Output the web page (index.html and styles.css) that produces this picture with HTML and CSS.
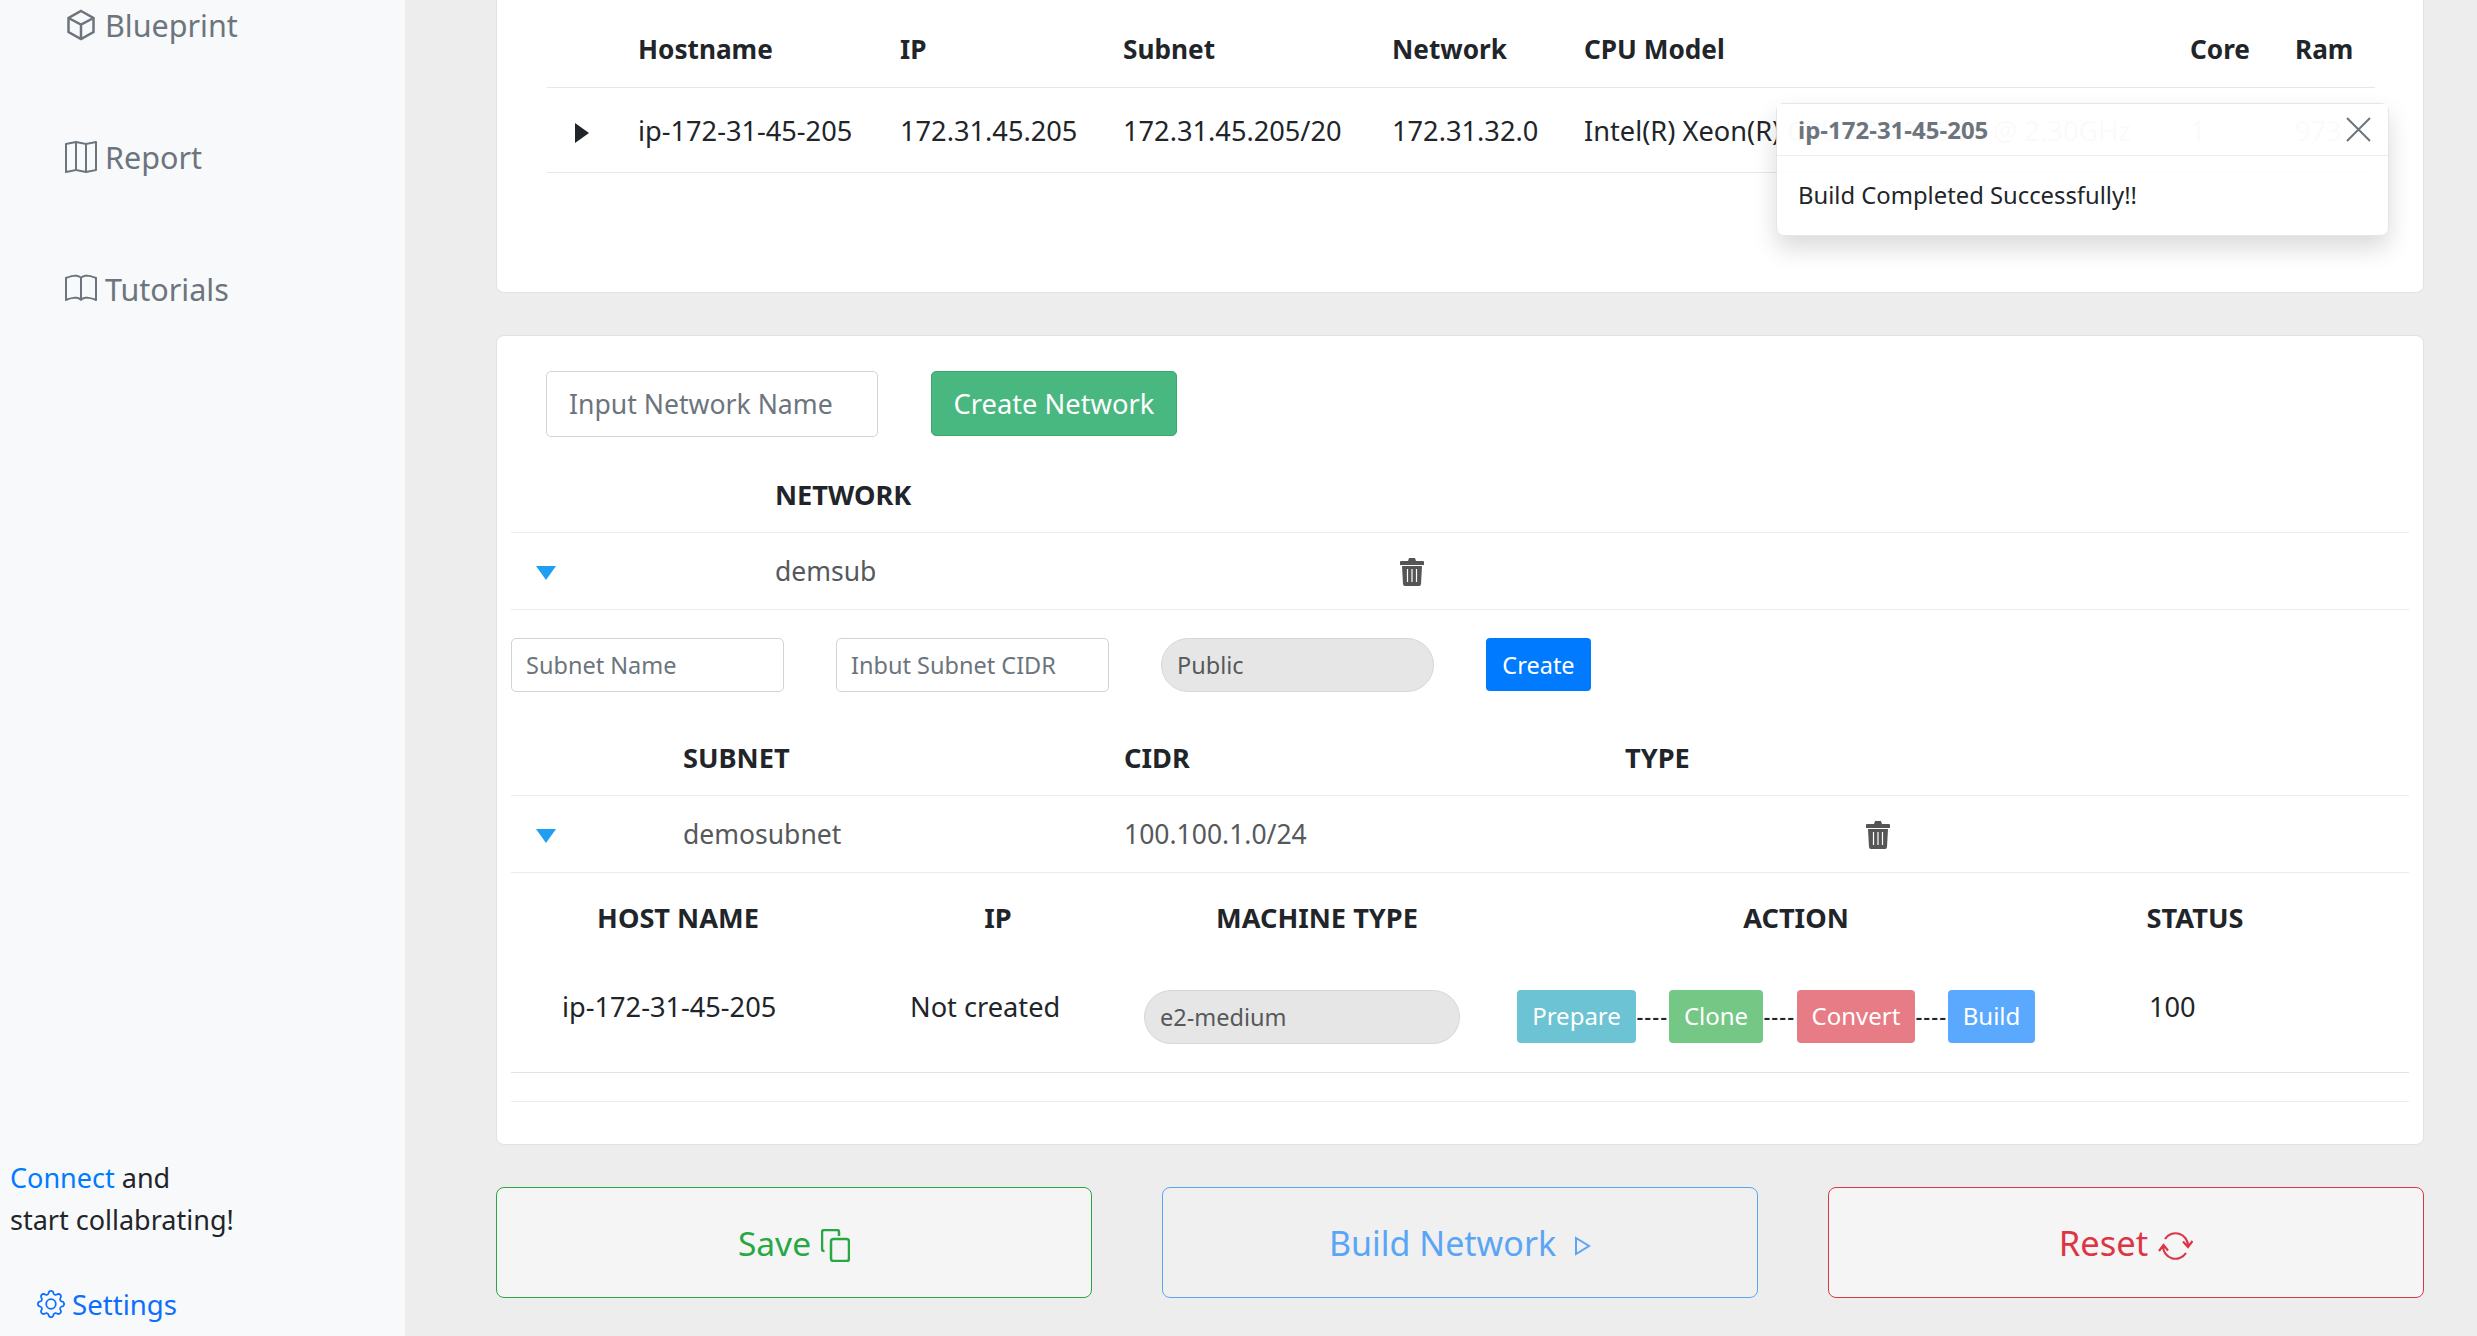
FILE: index.html
```html
<!DOCTYPE html>
<html lang="en">
<head>
  <meta charset="UTF-8" />
  <title>Network Builder</title>
  <link rel="stylesheet" href="styles.css">
</head>
<body>
  <div class="app">
    <aside class="sidebar">
      <nav class="side-nav">
        <a href="#blueprint">
          <svg class="nav-icon box-icon" viewBox="0 0 28 31"><path d="M14 1.500l12.500 7v14L14 29.500l-12.500-7v-14zM1.500 8.500L14 15l12.500-6.500M14 15v14.500"/></svg>
          Blueprint
        </a>
        <a href="#report">
          <svg class="nav-icon" viewBox="0 0 16 16"><path d="M15.817.113A.5.5 0 0 1 16 .5v14a.5.5 0 0 1-.402.49l-5 1a.502.502 0 0 1-.196 0L5.5 15.01l-4.902.98A.5.5 0 0 1 0 15.5v-14a.5.5 0 0 1 .402-.49l5-1a.5.5 0 0 1 .196 0L10.5.99l4.902-.98a.5.5 0 0 1 .415.103zM10 1.910l-4-.8v12.980l4 .8V1.910zm1 12.980 4-.8V1.110l-4 .8v12.980zm-6-.8V1.110l-4 .8v12.980l4-.8z"/></svg>
          Report
        </a>
        <a href="#tutorials">
          <svg class="nav-icon" viewBox="0 0 16 16"><path d="M1 2.828c.885-.37 2.154-.769 3.388-.893 1.33-.134 2.458.063 3.112.752v9.746c-.935-.53-2.12-.603-3.213-.493-1.18.12-2.37.461-3.287.811V2.828zm7.5-.141c.654-.689 1.782-.886 3.112-.752 1.234.124 2.503.523 3.388.893v9.923c-.918-.35-2.107-.692-3.287-.81-1.094-.111-2.278-.039-3.213.492V2.687zM8 1.783C7.015.936 5.587.81 4.287.94c-1.514.153-3.042.672-3.994 1.105A.5.5 0 0 0 0 2.5v11a.5.5 0 0 0 .707.455c.882-.4 2.303-.881 3.68-1.02 1.409-.142 2.59.087 3.223.877a.5.5 0 0 0 .78 0c.633-.79 1.814-1.019 3.222-.877 1.378.139 2.8.62 3.681 1.02A.5.5 0 0 0 16 13.5v-11a.5.5 0 0 0-.293-.455c-.952-.433-2.48-.952-3.994-1.105C10.413.809 8.985.936 8 1.783z"/></svg>
          Tutorials
        </a>
      </nav>
      <div class="side-foot">
        <p class="collab"><a href="#connect">Connect</a> and<br>start collabrating!</p>
        <a class="settings" href="#settings">
          <svg class="gear-icon" viewBox="0 0 16 16"><path d="M8 4.754a3.246 3.246 0 1 0 0 6.492 3.246 3.246 0 0 0 0-6.492zM5.754 8a2.246 2.246 0 1 1 4.492 0 2.246 2.246 0 0 1-4.492 0z"/><path d="M9.796 1.343c-.527-1.79-3.065-1.79-3.592 0l-.094.319a.873.873 0 0 1-1.255.52l-.292-.16c-1.64-.892-3.433.902-2.54 2.541l.159.292a.873.873 0 0 1-.52 1.255l-.319.094c-1.79.527-1.79 3.065 0 3.592l.319.094a.873.873 0 0 1 .52 1.255l-.16.292c-.892 1.64.901 3.434 2.541 2.54l.292-.159a.873.873 0 0 1 1.255.52l.094.319c.527 1.79 3.065 1.79 3.592 0l.094-.319a.873.873 0 0 1 1.255-.52l.292.16c1.64.893 3.434-.902 2.54-2.541l-.159-.292a.873.873 0 0 1 .52-1.255l.319-.094c1.79-.527 1.79-3.065 0-3.592l-.319-.094a.873.873 0 0 1-.52-1.255l.16-.292c.893-1.64-.902-3.433-2.541-2.54l-.292.159a.873.873 0 0 1-1.255-.52l-.094-.319zm-2.633.283c.246-.835 1.428-.835 1.674 0l.094.319a1.873 1.873 0 0 0 2.693 1.115l.291-.16c.764-.415 1.6.42 1.184 1.185l-.159.292a1.873 1.873 0 0 0 1.116 2.692l.318.094c.835.246.835 1.428 0 1.674l-.319.094a1.873 1.873 0 0 0-1.115 2.693l.16.291c.415.764-.42 1.6-1.185 1.184l-.291-.159a1.873 1.873 0 0 0-2.693 1.116l-.094.318c-.246.835-1.428.835-1.674 0l-.094-.319a1.873 1.873 0 0 0-2.692-1.115l-.292.16c-.764.415-1.6-.42-1.184-1.185l.159-.291A1.873 1.873 0 0 0 1.945 8.930l-.319-.094c-.835-.246-.835-1.428 0-1.674l.319-.094A1.873 1.873 0 0 0 3.060 4.377l-.16-.292c-.415-.764.42-1.6 1.185-1.184l.292.159a1.873 1.873 0 0 0 2.692-1.115l.094-.319z"/></svg>
          Settings
        </a>
      </div>
    </aside>

    <main class="content">
      <section class="card card-hosts">
        <div class="host-row host-head">
          <span></span><span>Hostname</span><span>IP</span><span>Subnet</span><span>Network</span><span>CPU Model</span><span>Core</span><span>Ram</span>
        </div>
        <div class="host-row">
          <svg class="caret-right" viewBox="0 0 14 20"><path d="M0 0l14 10L0 20z"/></svg>
          <span>ip-172-31-45-205</span><span>172.31.45.205</span><span>172.31.45.205/20</span><span>172.31.32.0</span>
          <span class="cpu">Intel(R) Xeon(R) CPU E5-2686 v4 @ 2.30GHz</span><span>1</span><span>973</span>
        </div>

        <div class="toast">
          <div class="toast-head">
            <strong>ip-172-31-45-205</strong>
            <svg class="toast-close" viewBox="0 0 25 25"><path d="M1 1l23 23M24 1L1 24"/></svg>
          </div>
          <div class="toast-body">Build Completed Successfully!!</div>
        </div>
      </section>

      <section class="card card-network">
        <div class="net-form">
          <input class="input input-lg" placeholder="Input Network Name">
          <button class="btn-create-net">Create Network</button>
        </div>

        <div class="net-row net-head"><span></span><span>NETWORK</span></div>
        <div class="net-row">
          <svg class="caret-down" viewBox="0 0 20 14"><path d="M0 0h20L10 14z"/></svg>
          <span>demsub</span>
          <svg class="trash" viewBox="0 0 24 28"><path d="M9 0h6l1 3h7a1 1 0 0 1 1 1v3H0V4a1 1 0 0 1 1-1h7zM2 8h20l-1 18a2 2 0 0 1-2 2H5a2 2 0 0 1-2-2z"/><path class="trash-bars" d="M7.5 11v13M12 11v13M16.500 11v13"/></svg>
        </div>

        <div class="subnet-form">
          <input class="input" placeholder="Subnet Name">
          <input class="input" placeholder="Inbut Subnet CIDR">
          <div class="select">Public</div>
          <button class="btn-create">Create</button>
        </div>

        <div class="subnet-row subnet-head"><span></span><span>SUBNET</span><span>CIDR</span><span>TYPE</span></div>
        <div class="subnet-row">
          <svg class="caret-down" viewBox="0 0 20 14"><path d="M0 0h20L10 14z"/></svg>
          <span>demosubnet</span>
          <span>100.100.1.0/24</span>
          <span></span>
          <svg class="trash" viewBox="0 0 24 28"><path d="M9 0h6l1 3h7a1 1 0 0 1 1 1v3H0V4a1 1 0 0 1 1-1h7zM2 8h20l-1 18a2 2 0 0 1-2 2H5a2 2 0 0 1-2-2z"/><path class="trash-bars" d="M7.5 11v13M12 11v13M16.500 11v13"/></svg>
        </div>

        <div class="machine-head">
          <span>HOST NAME</span><span>IP</span><span>MACHINE TYPE</span><span>ACTION</span><span>STATUS</span>
        </div>
        <div class="machine-row">
          <span>ip-172-31-45-205</span>
          <span>Not created</span>
          <div class="select select-machine">e2-medium</div>
          <div class="actions">
            <button class="step step-prepare">Prepare</button><span class="dash">----</span>
            <button class="step step-clone">Clone</button><span class="dash">----</span>
            <button class="step step-convert">Convert</button><span class="dash">----</span>
            <button class="step step-build">Build</button>
          </div>
          <span>100</span>
        </div>
        <div class="empty-row"></div>
      </section>

      <div class="bottom-btns">
        <button class="big-btn big-save">Save
          <svg class="save-icon" viewBox="0 0 29 33"><rect x="10" y="10" width="18" height="22" rx="2.500"/><path d="M3.500 22H3a2 2 0 0 1-2-2V3a2 2 0 0 1 2-2h13a2 2 0 0 1 2 2v4"/></svg>
        </button>
        <button class="big-btn big-build">Build Network
          <svg class="play-icon" viewBox="0 0 17 20"><path d="M2 2l13 8-13 8z"/></svg>
        </button>
        <button class="big-btn big-reset">Reset
          <svg class="reset-icon" viewBox="0 0 35 28"><path d="M7 7A12.500 12.500 0 0 1 30 14M28 21A12.500 12.500 0 0 1 5 14M25 9.500l5 5.500 4.500-6M1 19l4.500-6 4.500 5.500"/></svg>
        </button>
      </div>
    </main>
  </div>
</body>
</html>
```

FILE: styles.css
```css
* {
  box-sizing: border-box;
}
html, body {
  margin: 0;
  height: 1336px;
  overflow: hidden;
}
body {
  font-family: "Noto Sans", "Open Sans", sans-serif;
  font-size: 26.500px;
  color: #212529;
  background: #eeedee;
}
a {
  text-decoration: none;
}
button, input {
  font-family: inherit;
}
.app {
  display: flex;
  height: 1336px;
}

/* sidebar */
.sidebar {
  width: 405px;
  flex: none;
  background: #f8f9fa;
  display: flex;
  flex-direction: column;
  justify-content: space-between;
}
.side-nav {
  display: flex;
  flex-direction: column;
  gap: 90px;
  padding: 4px 0 0 65px;
}
.side-nav a {
  display: flex;
  align-items: center;
  gap: 8px;
  height: 42px;
  font-size: 30.500px;
  color: #6c757d;
}
.nav-icon {
  width: 32px;
  height: 32px;
  fill: #6c757d;
}
.box-icon {
  padding: 0 2px;
  fill: none;
  stroke: #6c757d;
  stroke-width: 2.500;
}
.side-foot {
  padding: 0 0 13px 10px;
}
.collab {
  margin: 0 0 44px;
  line-height: 42px;
  font-size: 27px;
}
.collab a {
  color: #007bff;
}
.settings {
  display: flex;
  align-items: center;
  gap: 7px;
  padding-left: 27px;
  font-size: 27.600px;
  color: #0d6efd;
}
.gear-icon {
  width: 28px;
  height: 28px;
  fill: #0d6efd;
}

/* main column */
.content {
  flex: 1;
  padding: 0 53px 0 91px;
  display: flex;
  flex-direction: column;
}
.card {
  background: #fff;
  border: 1px solid #e2e2e4;
  border-top-width: 0;
  border-radius: 0 0 8px 8px;
}
.card-hosts {
  position: relative;
  height: 293px;
  padding: 0 48px 0 50px;
  margin-bottom: 42px;
}
.card-network {
  height: 810px;
  padding: 35px 14px 0;
  border-top-width: 1px;
  border-radius: 8px;
  margin-bottom: 42px;
}

/* host table */
.host-row {
  display: grid;
  grid-template-columns: 91px 262px 223px 269px 192px 606px 105px 1fr;
  align-items: center;
  height: 85px;
  border-bottom: 1px solid #e5e7ea;
  white-space: nowrap;
  font-size: 27.200px;
}
.host-head {
  height: 88px;
  font-weight: 700;
  padding-top: 10px;
  font-size: 26.200px;
}
.caret-right {
  width: 14px;
  height: 20px;
  margin: 6px 0 0 28px;
  fill: #212529;
}

/* toast */
.toast {
  position: absolute;
  top: 103px;
  right: 34px;
  width: 613px;
  height: 133px;
  background: rgba(255, 255, 255, 0.85);
  border: 1px solid rgba(0, 0, 0, 0.1);
  border-radius: 8px;
  box-shadow: 0 12px 24px rgba(0, 0, 0, 0.15);
}
.toast-head {
  display: flex;
  align-items: center;
  justify-content: space-between;
  height: 52px;
  padding: 0 17px 0 21px;
  border-bottom: 1px solid #eceef0;
  background: rgba(255, 255, 255, 0.85);
  color: #6c757d;
  font-size: 24px;
}
.toast-close {
  width: 25px;
  height: 25px;
  fill: none;
  stroke: #6c757d;
  stroke-width: 2;
}
.toast-body {
  padding: 23px 21px;
  font-size: 23.800px;
}

/* network form */
.input {
  width: 273px;
  height: 54px;
  padding: 0 14px;
  border: 1px solid #ced4da;
  border-radius: 5px;
  background: #fff;
  font-size: 23.500px;
}
.input::placeholder {
  color: #6c757d;
  opacity: 1;
}
.input-lg {
  width: 332px;
  height: 66px;
  padding: 0 22px;
  font-size: 26.600px;
}
.net-form {
  display: flex;
  gap: 53px;
  align-items: flex-start;
  padding-left: 35px;
  height: 67px;
}
.btn-create-net {
  width: 246px;
  height: 65px;
  background: #48b780;
  border: 1px solid #3ba86a;
  border-radius: 5px;
  color: #fff;
  font-size: 27.300px;
}
.net-row {
  display: grid;
  grid-template-columns: 264px 625px 1fr;
  align-items: center;
  height: 77px;
  border-bottom: 1px solid #e9ecef;
  color: #55595c;
}
.net-head {
  height: 95px;
  padding-top: 18px;
  color: #212529;
  font-weight: 700;
  font-size: 27.200px;
}
.caret-down {
  width: 20px;
  height: 14px;
  margin: 4px 0 0 25px;
  fill: #1e9ff2;
}
.trash {
  width: 24px;
  height: 28px;
  margin-top: 2px;
  fill: #555;
}
.trash-bars {
  fill: none;
  stroke: #fff;
  stroke-width: 1.200;
}

/* subnet */
.subnet-form {
  display: flex;
  gap: 52px;
  align-items: flex-start;
  padding-top: 28px;
  height: 83px;
}
.select {
  width: 273px;
  height: 54px;
  padding: 0 15px;
  display: flex;
  align-items: center;
  border: 1px solid #d5d7da;
  border-radius: 27px;
  background: #e6e6e6;
  color: #55595c;
  font-size: 23.500px;
}
.btn-create {
  width: 105px;
  height: 53px;
  background: #007bff;
  border: none;
  border-radius: 4px;
  color: #fff;
  font-size: 23.500px;
}
.subnet-row {
  display: grid;
  grid-template-columns: 172px 441px 501px 241px 1fr;
  align-items: center;
  height: 77px;
  border-bottom: 1px solid #e9ecef;
  color: #55595c;
}
.subnet-head {
  height: 103px;
  padding-top: 26px;
  color: #212529;
  font-weight: 700;
  font-size: 27.200px;
}

/* machine table */
.machine-head {
  display: grid;
  grid-template-columns: 334px 306px 332px 626px 172px 1fr;
  align-items: center;
  height: 88px;
  text-align: center;
  font-weight: 700;
  font-size: 27.200px;
}
.machine-row {
  display: grid;
  grid-template-columns: 348px 234px 316px 689px 1fr;
  align-items: start;
  height: 112px;
  padding: 29px 0 0 51px;
  line-height: 34px;
  border-bottom: 1px solid #dfe2e6;
  font-size: 27.200px;
}
.select-machine {
  width: 316px;
  line-height: normal;
}
.actions {
  display: flex;
  align-items: center;
  padding-left: 57px;
  height: 53px;
}
.step {
  height: 53px;
  border: none;
  border-radius: 4px;
  color: #fff;
  font-size: 24px;
  padding: 0 0 3px;
}
.step-prepare { width: 119px; background: #6bc3d3; }
.step-clone { width: 94px; background: #75c786; }
.step-convert { width: 118px; background: #e87c86; margin-left: 1px; }
.step-build { width: 87px; background: #5aa9ff; }
.dash {
  width: 33px;
  text-align: center;
  font-size: 20px;
  font-weight: 600;
  letter-spacing: 1.500px;
  color: #212529;
}
.empty-row {
  height: 29px;
  border-bottom: 1px solid #e9ecef;
}

/* big buttons at the bottom */
.bottom-btns {
  display: grid;
  grid-template-columns: repeat(3, 596px);
  gap: 70px;
}
.big-btn {
  height: 111px;
  display: flex;
  align-items: center;
  justify-content: center;
  gap: 10px;
  background: #f5f5f5;
  border: 1px solid;
  border-radius: 8px;
  font-size: 33.500px;
}
.big-save { color: #28a745; border-color: #28a745; }
.big-build { color: #5aa5f5; border-color: #5aa5f5; background: #f0f0f0; gap: 18px; padding-right: 6px; font-size: 34px; }
.big-reset { color: #dc3545; border-color: #dc3545; font-size: 34.500px; }
.save-icon {
  width: 29px;
  height: 33px;
  margin-top: 6px;
  fill: none;
  stroke: currentColor;
  stroke-width: 2.500;
}
.reset-icon {
  width: 35px;
  height: 28px;
  margin-top: 6px;
  fill: none;
  stroke: currentColor;
  stroke-width: 2.200;
}
.play-icon {
  width: 17px;
  height: 20px;
  margin-top: 6px;
  fill: none;
  stroke: currentColor;
  stroke-width: 2;
}
```
